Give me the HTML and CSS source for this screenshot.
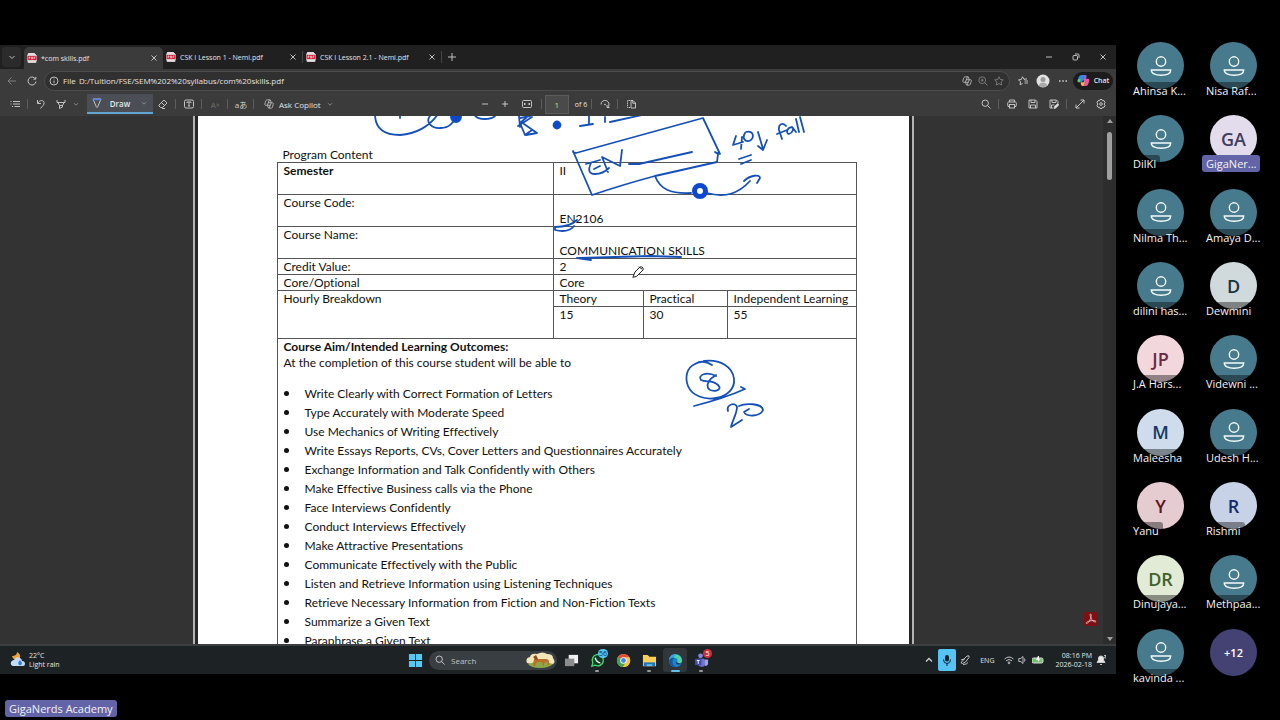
FILE: index.html
```html
<!DOCTYPE html>
<html lang="en">

<head>
    <meta charset="UTF-8">
    <meta name="viewport" content="width=device-width, initial-scale=1.0">
    <title>GigaNerds Academy</title>
    <link rel="stylesheet" href="styles.css">
</head>

<body>

    <!-- shared icons -->
    <svg class="defs" aria-hidden="true">
        <symbol id="pdf" viewBox="0 0 10 10"><path d="M2 0h5l2 2v7.500H1V1z" fill="#f3dcdc"/><rect y="2.500" width="10" height="5" rx="1" fill="#d8203a"/><path d="M2 6V4h1v1H2M4.500 4v2h1V4zM7 6V4h1.500M7 5h1" stroke="#fff" stroke-width=".5" fill="none"/></symbol>
        <symbol id="close" viewBox="0 0 10 10"><path d="M2.500 2.500l5 5M7.500 2.500l-5 5"/></symbol>
        <symbol id="chevron" viewBox="0 0 10 10"><path d="M2.500 4L5 6.500 7.500 4"/></symbol>
        <symbol id="plus" viewBox="0 0 10 10"><path d="M5 1v8M1 5h8"/></symbol>
        <symbol id="star" viewBox="0 0 10 10"><path d="M5 .8l1.300 2.700 3 .4-2.200 2.100.6 3L5 7.600 2.300 9l.6-3L.7 3.900l3-.4z"/></symbol>
        <symbol id="zoomicon" viewBox="0 0 10 10"><circle cx="4.200" cy="4.200" r="3.200"/><path d="M6.500 6.500l3 3"/></symbol>
        <symbol id="copilot" viewBox="0 0 12 12"><path d="M4.500 1h3l1.300 3.500h1.500c1 0 1 1 .8 1.800L10 10c-.3.800-.8 1-1.500 1h-3L4 7.500H2C1 7.500.8 6.600 1 6l1-3.500C2.300 1.500 3 1 4.500 1zM6.500 1L4 7.500M8.800 4.500L6 11M5 4.500h3.500M4 7.500h3.500"/></symbol>
        <symbol id="person" viewBox="0 0 22 22"><circle cx="11" cy="6.500" r="4.700"/><path d="M1.300 15h19.400c0 3.500-4 5.200-9.700 5.200S1.300 18.500 1.300 15z"/></symbol>
    </svg>

    <main class="shared">
        <div class="desktop">
            <div class="tabs">
                <button class="tab-menu" aria-label="Tab actions"><svg class="icon"><use href="#chevron"/></svg></button>
                <div class="tab active"><svg class="icon"><use href="#pdf"/></svg><span>*com skills.pdf</span><button aria-label="Close tab"><svg class="icon"><use href="#close"/></svg></button></div>
                <div class="tab"><svg class="icon"><use href="#pdf"/></svg><span>CSK I Lesson 1 - Nemi.pdf</span><button aria-label="Close tab"><svg class="icon"><use href="#close"/></svg></button></div>
                <div class="tab"><svg class="icon"><use href="#pdf"/></svg><span>CSK I Lesson 2.1 - Nemi.pdf</span><button aria-label="Close tab"><svg class="icon"><use href="#close"/></svg></button></div>
                <button class="tool" aria-label="New tab"><svg class="icon"><use href="#plus"/></svg></button>
                <div class="window-buttons">
                    <button aria-label="Minimize"><svg class="icon" viewBox="0 0 10 10"><path d="M2 5h6"/></svg></button>
                    <button aria-label="Restore"><svg class="icon" viewBox="0 0 10 10"><rect x="2" y="3.500" width="4.500" height="4.500" rx="1"/><path d="M4 2h3c.7 0 1 .3 1 1v3"/></svg></button>
                    <button aria-label="Close"><svg class="icon"><use href="#close"/></svg></button>
                </div>
            </div>

            <div class="address">
                <button class="tool dim" aria-label="Back"><svg class="icon" viewBox="0 0 10 10"><path d="M9 5H1M4.500 1.500L1 5l3.500 3.500"/></svg></button>
                <button class="tool" aria-label="Reload"><svg class="icon" viewBox="0 0 10 10"><path d="M8.500 3A4 4 0 1 0 9 5.500M8.800.8v2.400H6.400"/></svg></button>
                <div class="url">
                    <svg class="icon" viewBox="0 0 10 10"><circle cx="5" cy="5" r="4"/><path d="M5 4.500v2.700M5 2.600v.8"/></svg>
                    <label for="url">File</label>
                    <input type="text" id="url" value="D:/Tuition/FSE/SEM%202%20syllabus/com%20skills.pdf">
                    <button aria-label="Copilot"><svg class="icon"><use href="#copilot"/></svg></button>
                    <button class="dim" aria-label="Zoom"><svg class="icon" viewBox="0 0 10 10"><circle cx="4.200" cy="4.200" r="3.400"/><path d="M6.700 6.700l2.800 2.800M4.200 2.700v3M2.700 4.200h3"/></svg></button>
                    <button class="dim" aria-label="Favorite"><svg class="icon"><use href="#star"/></svg></button>
                </div>
                <button class="tool" aria-label="Favorites"><svg class="icon" viewBox="0 0 10 10"><path d="M7 3.500L6 3.300 4.500.8 3.300 3.500l-2.800.3 2 2-.4 3L4.500 7.500M6.500 5H10M6.500 7H10M6.500 3H9"/></svg></button>
                <button class="tool" aria-label="Profile"><svg class="profile" viewBox="0 0 14 14"><circle cx="7" cy="7" r="6.500" fill="#e2e2e2"/><circle cx="7" cy="5.500" r="2.500" fill="#9a9a9a"/><path d="M2.800 11.500c1-4 7.400-4 8.400 0-2 2.200-6.400 2.200-8.400 0z" fill="#aaa"/></svg></button>
                <button class="tool" aria-label="Settings and more"><svg class="icon" viewBox="0 0 10 10"><path d="M1 5h1.500M4.300 5h1.500M7.500 5H9" stroke-width="1.500"/></svg></button>
                <button class="chat">
                    <svg viewBox="0 0 14 14"><path d="M5 1h3L6 8 4 9H2Q0 9 1 6l1-3q1-2 3-2z" fill="#2b8fe0"/><path d="M1 6l3-1-1 4H2Q0 9 1 6z" fill="#6bcf5e"/><path d="M8 1h1q2 0 1 3L9 7H6z" fill="#9a62ea"/><path d="M8 5h4q2 0 1 3l-1 3q-1 2-3 2H6z" fill="#ea5a95"/><path d="M4 9h4l-1 4H6q-2 0-2-4z" fill="#f5b64a"/></svg>
                    Chat
                </button>
            </div>

            <div class="toolbar">
                <div class="tools">
                    <button class="tool" aria-label="Contents"><svg class="icon" viewBox="0 0 10 10"><path d="M3 2.500h7M3 5h7M4.500 7.500H10M.5 2.500h1M.5 5h1M2 7.500h1"/></svg></button>
                    <i class="sep"></i>
                    <button class="tool" aria-label="Undo"><svg class="icon" viewBox="0 0 10 10"><path d="M1.500 1v3.500H5M1.700 4.200C4 .8 7.500.8 8 3.500S6 7 4.500 9.500"/></svg></button>
                    <button class="tool" aria-label="Highlight"><svg class="icon" viewBox="0 0 10 10"><path d="M1 1v2.500h8V1M2 3.500l1.500 3h3L8 3.500M3.500 6.500v3L6.500 8V6.500"/></svg></button>
                    <button class="arrow" aria-label="Highlight colors"><svg class="chev"><use href="#chevron"/></svg></button>
                    <button class="draw"><svg class="icon" viewBox="0 0 10 10"><path d="M1 1h8L5.800 8.500 5 9.500l-.8-1z"/><path d="M1 1.500h8" stroke="#4f7fe8" stroke-width="1.500"/></svg><b>Draw</b><svg class="chev"><use href="#chevron"/></svg></button>
                    <button class="tool" aria-label="Erase"><svg class="icon" viewBox="0 0 10 10"><path d="M6 1l3 3-4.500 4.500h-2L1 7l0-1zM3.500 3.500l3 3M4 9.500h3"/></svg></button>
                    <i class="sep"></i>
                    <button class="tool" aria-label="Add text"><svg class="icon" viewBox="0 0 10 10"><rect x=".5" y="1" width="9" height="8" rx="1.500"/><path d="M3 4V3h4v1M5 3v4M4 7h2"/></svg></button>
                    <i class="sep"></i>
                    <button class="tool faint" aria-label="Read aloud">A<sup>»</sup></button>
                    <i class="sep"></i>
                    <button class="tool" aria-label="Translate">aあ</button>
                    <i class="sep"></i>
                    <button class="ask"><svg class="icon"><use href="#copilot"/></svg><span>Ask Copilot</span><svg class="chev"><use href="#chevron"/></svg></button>
                </div>
                <div class="tools">
                    <button class="tool" aria-label="Zoom out"><svg class="icon" viewBox="0 0 10 10"><path d="M2 5h6"/></svg></button>
                    <button class="tool" aria-label="Zoom in"><svg class="icon" viewBox="0 0 10 10"><path d="M5 2v6M2 5h6"/></svg></button>
                    <button class="tool wide" aria-label="Fit to width"><svg class="icon" viewBox="0 0 10 10"><rect x=".5" y="1.500" width="9" height="7" rx="1"/><path d="M2 5h2M6 5h2M3 4L2 5l1 1M7 4l1 1-1 1"/></svg></button>
                    <i class="sep"></i>
                    <input type="text" id="page" class="page-number" value="1">
                    <label for="page">of 6</label>
                    <i class="sep"></i>
                    <button class="tool" aria-label="Rotate"><svg class="icon" viewBox="0 0 10 10"><path d="M1 5.500a4 4 0 1 1 6.500 3M9.500 8.500h-2.500V6"/><circle cx="5" cy="5.500" r=".5"/></svg></button>
                    <i class="sep"></i>
                    <button class="tool" aria-label="Page view"><svg class="icon" viewBox="0 0 10 10"><path d="M4 1.500H1.500v7H4" stroke-dasharray="1.500 .7"/><path d="M5 1v8h4.500V4L7 1.500H5M6.800 2v2.300h2.500"/></svg></button>
                </div>
                <div class="tools right">
                    <button class="tool" aria-label="Search"><svg class="icon"><use href="#zoomicon"/></svg></button>
                    <i class="sep"></i>
                    <button class="tool" aria-label="Print"><svg class="icon" viewBox="0 0 10 10"><path d="M2.500 3V1h5v2M2.500 7.500H1c-.8-4.500 0-4.500 1-4.500h6c1 0 1.800 0 1 4.500H7.500"/><rect x="2.500" y="5.500" width="5" height="3.500"/></svg></button>
                    <button class="tool" aria-label="Save"><svg class="icon" viewBox="0 0 10 10"><path d="M1 1h6.500L9 2.500V9H1zM3 1v2.500h4V1M2.500 9V6h5v3"/></svg></button>
                    <button class="tool" aria-label="Save as"><svg class="icon" viewBox="0 0 10 10"><path d="M4 9H1V1h6.500L9 2.500V4M3 1v2.500h4V1M2.500 9V6h3"/><path d="M5 9.500l.5-2L9 4.500l1 1L6.800 9z" fill="#eee"/></svg></button>
                    <i class="sep"></i>
                    <button class="tool" aria-label="Full screen"><svg class="icon" viewBox="0 0 10 10"><path d="M1 9l8-8M5.500 1H9v3.500M1 5.500V9h3.500"/></svg></button>
                    <button class="tool" aria-label="Settings"><svg class="icon" viewBox="0 0 10 10"><path d="M4 .5h2l.5 1.300 1.500-.2 1 1.700-.8 1.700.8 1.700-1 1.700-1.500-.2L6 9.500H4l-.5-1.300-1.500.2-1-1.700L1.800 5 1 3.300l1-1.700 1.500.2z"/><circle cx="5" cy="5" r="1.300"/></svg></button>
                </div>
            </div>

            <div class="viewer">
                <article class="page">
                    <p class="caption">Program Content</p>
                    <table class="course">
                        <colgroup><col class="col-name"><col class="col-theory"><col class="col-practical"><col></colgroup>
                        <tr class="tall"><th>Semester</th><td colspan="3">II</td></tr>
                        <tr class="tall"><td>Course Code:</td><td colspan="3" class="low">EN2106</td></tr>
                        <tr class="tall"><td>Course Name:</td><td colspan="3" class="low">COMMUNICATION SKILLS</td></tr>
                        <tr><td>Credit Value:</td><td colspan="3">2</td></tr>
                        <tr><td>Core/Optional</td><td colspan="3">Core</td></tr>
                        <tr><td rowspan="2">Hourly Breakdown</td><td>Theory</td><td>Practical</td><td>Independent Learning</td></tr>
                        <tr class="tall"><td>15</td><td>30</td><td>55</td></tr>
                        <tr>
                            <td colspan="4" class="outcomes">
                                <h2>Course Aim/Intended Learning Outcomes:</h2>
                                <p>At the completion of this course student will be able to</p>
                                <ul>
                                    <li>Write Clearly with Correct Formation of Letters</li>
                                    <li>Type Accurately with Moderate Speed</li>
                                    <li>Use Mechanics of Writing Effectively</li>
                                    <li>Write Essays Reports, CVs, Cover Letters and Questionnaires Accurately</li>
                                    <li>Exchange Information and Talk Confidently with Others</li>
                                    <li>Make Effective Business calls via the Phone</li>
                                    <li>Face Interviews Confidently</li>
                                    <li>Conduct Interviews Effectively</li>
                                    <li>Make Attractive Presentations</li>
                                    <li>Communicate Effectively with the Public</li>
                                    <li>Listen and Retrieve Information using Listening Techniques</li>
                                    <li>Retrieve Necessary Information from Fiction and Non-Fiction Texts</li>
                                    <li>Summarize a Given Text</li>
                                    <li>Paraphrase a Given Text</li>
                                </ul>
                            </td>
                        </tr>
                    </table>

                    <!-- pen strokes drawn over the page -->
                    <svg class="ink" viewBox="198 116 711 528" aria-hidden="true">
                        <path d="M375 114C375 131 388 135 400 135C416 134 430 126 438 114M400 114v4M430 116C425 122 432 129 441 128C449 128 453 123 457 116M474 114C477 121 492 120 496 115"/>
                        <path d="M519 116L520 127M520 118L530 116M520 123L527 117M518 126L532 117M520 123L525 135L532 130M524 124L537 133L526 135M589 114V124M580 126L593 124M605 117V122M610 122L642 115"/>
                        <path d="M573 152L576 153L703 118L720 154L715 152L718 154L717 162Q690 168 655 176Q625 184 592 195L573 151"/>
                        <path d="M586 164Q593 162 600 160M591 163Q586 174 595 174Q603 174 609 168M594 169L600 166M608 172L602 157L620 166L622 150M629 164H639L692 152"/>
                        <path d="M736 136L733 145L743 142M742 137L741 149M745 133C742 138 745 142 749 141C755 138 754 130 746 132M758 132L763 149M758 146L763 150L767 140M739 159L751 155M741 164L751 160"/>
                        <path d="M786 126C783 122 778 124 779 130L782 139M777 134L787 130M793 128C788 125 785 134 789 134C793 133 794 128 792 127L796 132M796 119L799 132M800 117L804 132"/>
                        <path d="M655 176C660 189 670 194 691 193M707 193C725 198 738 194 750 181M744 181C750 175 760 174 760 178L757 183"/>
                        <path d="M577 220C571 226 563 227 555 227V230C563 232 570 231 574 226M577 258L591 260L580 258L650 256L681 257"/>
                        <path d="M712 365C706 361 700 361 695 364C686 368 685 378 688 386C692 396 705 400 716 398C728 396 735 388 734 379C733 367 720 359 704 361M716 376C707 371 697 375 701 380C706 383 712 379 718 385C724 391 711 393 708 388C706 382 711 378 716 375M694 406Q725 398 745 389L741 387M728 411C726 404 736 402 737 407C737 414 732 421 731 427L742 420M739 406C745 403 762 403 763 410C760 417 746 417 744 412L749 409"/>
                        <g class="blot"><circle cx="456" cy="117" r="5"/><circle cx="557" cy="125" r="3.500"/></g>
                        <circle class="ring" cx="700" cy="191" r="5.500"/>
                        <path class="cursor" d="M633 277l2-5 5-5q2-1 3 1t-1 3l-5 5zM639 267l3 2"/>
                    </svg>
                </article>

                <button class="acrobat" aria-label="Open in Acrobat"><svg viewBox="0 0 14 14"><path d="M6.500 2c1 0 .8 2 .4 3.500C6 8.500 4 11.500 2.800 11.500s-.8-1.500 2-2.300 6.500-.9 7 0-1.300 1.200-3-.3C7.200 7.600 5.300 2 6.500 2z"/></svg></button>
                <div class="scrollbar"><i></i><b></b><i class="down"></i></div>
            </div>

            <div class="taskbar">
                <div class="weather">
                    <svg viewBox="0 0 16 16"><path d="M7 0q0 4-5 4 1 4 5 4 4-1 3-5Q9 1 7 0z" fill="#eda53a"/><path d="M3 14q-3-1-2-4 1-2 3-2 2-4 6-2 2 1 2 3 3 0 3 3 0 2-2 2z" fill="#c5dcf6"/><path d="M10 8q-3 3-1 5 3 1 3-2z" fill="#2f7fe0"/></svg>
                    <p>22°C<br>Light rain</p>
                </div>
                <div class="apps">
                    <button aria-label="Start"><svg viewBox="0 0 16 16"><path d="M1 1h6.500v6.500H1zM8.500 1H15v6.500H8.500zM1 8.500h6.500V15H1zM8.500 8.500H15V15H8.500z" fill="#56c8f2"/></svg></button>
                    <div class="search">
                        <svg class="icon"><use href="#zoomicon"/></svg>
                        <input type="text" aria-label="Search" placeholder="Search">
                        <svg class="horse" viewBox="0 0 30 16"><path d="M2 11Q0 6 5 5q1-4 7-3 6-3 10 0 6 0 6 4 3 4 0 6-12 4-26-1z" fill="#f2e7b8"/><path d="M3 12q12-5 25 0-4 4-13 4T3 12z" fill="#8ea646"/><path d="M8 13l1-6 2-2 2 2h8q3 0 3 3v3h-1l-1-3-3 1v3h-1l-1-4h-5l-2 4H9z" fill="#b9702b"/><path d="M8 5l3-2 2 4-2 1z" fill="#8a4d1e"/></svg>
                    </div>
                    <button aria-label="Task view"><svg viewBox="0 0 16 16"><path d="M5 2h10v9H5z" fill="#f0f0f0"/><path d="M1 6h10v8H1z" fill="#8c8c8c"/></svg></button>
                    <button class="open" aria-label="WhatsApp"><svg viewBox="0 0 16 16"><path d="M2 14l1-3.500a6 6 0 1 1 2.500 2.500z" fill="#123a24" stroke="#41d66c" stroke-width="1.500"/><path d="M5.500 5q1.500 5 5.500 5.500" stroke="#eee" stroke-width="1.500" fill="none"/></svg><em>56</em></button>
                    <button aria-label="Chrome"><svg viewBox="0 0 16 16"><circle cx="8" cy="8" r="7" fill="#f7c631"/><path d="M8 8L2 4.500A7 7 0 0 1 14 4.500z" fill="#e64a3b"/><path d="M8 8L2 4.300A7 7 0 0 0 7.500 15L11 9.500z" fill="#3fa356"/><path d="M8 4.500h6.200A7 7 0 0 1 7.500 15L11 9z" fill="#f7c631"/><circle cx="8" cy="8" r="3.500" fill="#fff"/><circle cx="8" cy="8" r="2.600" fill="#4384ee"/></svg></button>
                    <button class="open" aria-label="File Explorer"><svg viewBox="0 0 16 16"><path d="M1 2h5l2 2h7v10H1z" fill="#f8cf58"/><path d="M2 10h12v4H2z" fill="#1e78b8"/><path d="M5 12h6v2H5z" fill="#6dbfe8"/></svg></button>
                    <button class="open current" aria-label="Edge"><svg viewBox="0 0 16 16"><circle cx="8" cy="8" r="7" fill="#1a82cf"/><path d="M1.200 7A7 7 0 0 1 15 8q0 3-4 3-2 0-1-2 1-4-4-4-3 0-4.800 2z" fill="#50d3a4"/><path d="M1.200 7A7 7 0 0 1 9 1q-2 2-3 4-3 0-4.800 2z" fill="#35a9e4"/><path d="M1 8q2-4 6-3-3 2-2 6 1 4 5 4Q2 16 1 8z" fill="#1758a6"/><path d="M9 9q-1 2 1 3 2 1 4-1-3 1-5-2z" fill="#23303a"/></svg></button>
                    <button class="open" aria-label="Teams"><svg viewBox="0 0 16 16"><circle cx="7" cy="3" r="2.500" fill="#8487e0"/><path d="M4 6h7v8q-5 2-7-2z" fill="#6f73d2"/><path d="M11 7h4v5q-2 3-4 1z" fill="#9b9eea"/><rect x="1" y="6" width="7" height="7" rx="1" fill="#4248b0"/><path d="M3 8h3M4.500 8v3.500" stroke="#fff"/></svg><em class="red">5</em></button>
                </div>
                <div class="tray">
                    <svg class="icon" viewBox="0 0 10 10"><path d="M2 6.500l3-3 3 3" stroke-width="1.300"/></svg>
                    <button class="mic" aria-label="Microphone"><svg viewBox="0 0 10 12"><rect x="3" y="1" width="4" height="6.500" rx="2" fill="#10222c"/><path d="M1.500 5.500q0 4 3.500 4t3.500-4M5 9.500V12" fill="none" stroke="#10222c"/></svg></button>
                    <svg class="icon" viewBox="0 0 10 10"><path d="M1 5l3-1 3-3q3-1 2 1.500L5.500 7 2.500 8.500q-2 0-1-1.500l3-3M3 9.500q4 0 5-2"/></svg>
                    <span class="lang">ENG</span>
                    <svg class="icon" viewBox="0 0 10 10"><path d="M.5 4q4.500-4 9 0M2 5.800q3-2.600 6 0M3.700 7.500q1.300-1 2.600 0"/><circle cx="5" cy="8.300" r=".5"/></svg>
                    <svg class="icon" viewBox="0 0 10 10"><path d="M.8 3.500h2L5 1.500v7l-2.200-2h-2zM6.500 3.500q1 1.500 0 3"/></svg>
                    <svg class="battery" viewBox="0 0 12 10"><rect x="0" y="3" width="11" height="5" rx="1.500" fill="#72c46c" stroke="#ddd"/><path d="M6 1L4 5h2v2l2-3H7V1z" fill="#fff"/></svg>
                    <p class="clock">08:16 PM<br>2026-02-18</p>
                    <svg class="icon" viewBox="0 0 10 10"><path d="M1 7.500L2.500 5V3q0-2 2.500-2t2.500 2v2L9 7.500z" fill="#e8e8e8"/><path d="M4 9.500h2M8 .5h2L8.500 3H10"/></svg>
                </div>
            </div>
        </div>

        <p class="presenter">GigaNerds Academy</p>
    </main>

    <aside class="people">
        <div class="person"><span class="avatar"><svg><use href="#person"/></svg></span><span class="name">Ahinsa K...</span></div>
        <div class="person"><span class="avatar"><svg><use href="#person"/></svg></span><span class="name">Nisa Raf...</span></div>
        <div class="person"><span class="avatar"><svg><use href="#person"/></svg></span><span class="name">DilKI</span></div>
        <div class="person speaking"><span class="avatar lilac">GA</span><span class="name">GigaNer...</span></div>
        <div class="person"><span class="avatar"><svg><use href="#person"/></svg></span><span class="name">Nilma Th...</span></div>
        <div class="person"><span class="avatar"><svg><use href="#person"/></svg></span><span class="name">Amaya D...</span></div>
        <div class="person"><span class="avatar"><svg><use href="#person"/></svg></span><span class="name">dilini has...</span></div>
        <div class="person"><span class="avatar mist">D</span><span class="name">Dewmini</span></div>
        <div class="person"><span class="avatar pink">JP</span><span class="name">J.A Hars...</span></div>
        <div class="person"><span class="avatar"><svg><use href="#person"/></svg></span><span class="name">Videwni ...</span></div>
        <div class="person"><span class="avatar sky">M</span><span class="name">Maleesha</span></div>
        <div class="person"><span class="avatar"><svg><use href="#person"/></svg></span><span class="name">Udesh H...</span></div>
        <div class="person"><span class="avatar rose">Y</span><span class="name">Yanu</span></div>
        <div class="person"><span class="avatar blue">R</span><span class="name">Rishmi</span></div>
        <div class="person"><span class="avatar green">DR</span><span class="name">Dinujaya...</span></div>
        <div class="person"><span class="avatar"><svg><use href="#person"/></svg></span><span class="name">Methpaa...</span></div>
        <div class="person"><span class="avatar"><svg><use href="#person"/></svg></span><span class="name">kavinda ...</span></div>
        <div class="person"><button class="avatar more">+12</button></div>
    </aside>

</body>

</html>
```
FILE: styles.css
```css
* {
    box-sizing: border-box;
}

body {
    margin: 0;
    height: 100vh;
    display: grid;
    grid-template-columns: minmax(0, 1fr) 164px;
    background-color: #000;
    color: #e4e4e4;
    font-family: "Open Sans", "Noto Sans", "Noto Sans CJK JP", sans-serif;
    font-size: 8px;
    overflow: hidden;
}

p, h2, ul {
    margin: 0;
    padding: 0;
}

button, input {
    margin: 0;
    padding: 0;
    border: none;
    background: none;
    color: inherit;
    font: inherit;
}

button {
    display: flex;
    align-items: center;
    justify-content: center;
}

input {
    min-width: 0;
    outline: none;
}

.defs {
    position: absolute;
    width: 0;
    height: 0;
}

.icon {
    width: 10px;
    height: 10px;
    flex: none;
    fill: none;
    stroke: #d0d0d0;
    stroke-width: 0.9;
}

.shared {
    display: flex;
    flex-direction: column;
    min-height: 0;
    padding-top: 45px;
}

.desktop {
    flex: 1;
    min-height: 0;
    display: flex;
    flex-direction: column;
}

/* browser */
.tabs {
    display: flex;
    align-items: center;
    height: 24px;
    padding-left: 2px;
    background-color: #202020;
}

.tab-menu {
    width: 19px;
    height: 20px;
    margin-right: 3px;
    border-radius: 4px;
    background-color: #2b2b2b;
}

.tab {
    display: flex;
    align-items: center;
    gap: 4px;
    width: 139px;
    height: 24px;
    padding: 0 4px 0 3px;
    font-size: 7px;
}

.tab span {
    flex: 1;
    white-space: nowrap;
}

.tab.active {
    height: 22px;
    align-self: flex-end;
    border-radius: 5px 5px 0 0;
    background-color: #3b3b3b;
}

.tab + .tab + .tab {
    border-left: 1px solid #444;
    height: 12px;
}

.tab + .tool {
    height: 12px;
    border-left: 1px solid #444;
}

.window-buttons {
    display: flex;
    margin-left: auto;
}

.window-buttons button {
    width: 27px;
}

.address {
    display: flex;
    align-items: center;
    height: 23px;
    padding: 0 3px 0 2px;
    background-color: #3b3b3b;
}

.tool {
    width: 20px;
    height: 18px;
    color: #ccc;
}

.dim {
    opacity: 0.5;
}

.faint {
    opacity: 0.35;
}

.url {
    flex: 1;
    display: flex;
    align-items: center;
    gap: 4px;
    height: 20px;
    margin: 0 3px 0 2px;
    padding: 0 4px;
    border: 1px solid #4c4c4c;
    border-radius: 10px;
    background-color: #303030;
}

.url label {
    width: 12px;
}

.url input {
    flex: 1;
}

.url button {
    width: 12px;
}

.profile {
    width: 14px;
    height: 14px;
}

.chat {
    gap: 4px;
    width: 40px;
    height: 18px;
    border-radius: 9px;
    background-color: #1c1c1c;
    font-size: 7px;
    font-weight: 600;
}

.chat svg {
    width: 13px;
    height: 13px;
}

.toolbar {
    display: flex;
    align-items: center;
    height: 24px;
    padding: 0 5px;
    background-color: #3b3b3b;
}

.tools {
    display: flex;
    align-items: center;
}

.tools:first-child,
.tools.right {
    flex: 1;
}

.tools.right {
    justify-content: flex-end;
    gap: 1px;
}

.sep {
    width: 2px;
    height: 10px;
    margin: 0 2px;
    border-left: 1px solid #5c5c5c;
}

.tools.right .sep {
    margin: 0 1px;
}

.arrow {
    width: 10px;
    margin-right: 6px;
}

.wide {
    width: 24px;
}

.chev {
    width: 8px;
    height: 8px;
    fill: none;
    stroke: #999;
}

.draw {
    gap: 10px;
    width: 66px;
    height: 20px;
    background-color: #4b4f55;
    border-bottom: 2px solid #62a3cf;
}

.draw .icon {
    margin-right: -2px;
}

.draw b {
    font-weight: 600;
}

.ask {
    gap: 5px;
    padding-left: 7px;
}

.page-number {
    width: 24px;
    height: 19px;
    margin-right: 6px;
    border: 1px solid #5c5c5c;
    background-color: #4a4a4a;
    color: #d9dc7a;
    text-align: center;
}

.tools label {
    margin-right: 2px;
    font-size: 7px;
}

/* pdf */
.viewer {
    position: relative;
    flex: 1;
    min-height: 0;
    display: flex;
    justify-content: center;
    padding-right: 10px;
    overflow: hidden;
    background-color: #333;
    border-bottom: 2px solid #3c3e40;
}

.page {
    position: relative;
    align-self: flex-start;
    width: 711px;
    padding: 31px 52px 20px 79px;
    background-color: #fff;
    box-shadow: 0 0 0 3px #262626, 0 0 0 5px #b4b4b4;
    color: #111;
    font-family: Lato, "Open Sans", sans-serif;
    font-size: 12px;
    font-variant-ligatures: none;
    line-height: 16px;
}

.caption {
    padding-left: 6px;
    line-height: 15px;
}

.course {
    width: 100%;
    table-layout: fixed;
    border-collapse: collapse;
}

.course th,
.course td {
    height: 16px;
    padding: 0 6px;
    border: 1px solid #555;
    line-height: 15px;
    text-align: left;
    vertical-align: top;
    white-space: nowrap;
}

.course .tall > * {
    height: 32px;
}

.course .low {
    vertical-align: bottom;
}

.col-name {
    width: 276px;
}

.col-theory {
    width: 90px;
}

.col-practical {
    width: 84px;
}

.course h2 {
    font-size: 12px;
    line-height: 16px;
}

.outcomes p {
    line-height: 16px;
}

.outcomes ul {
    margin-top: 13px;
    list-style: none;
}

.outcomes li {
    display: flex;
    align-items: center;
    gap: 16px;
    height: 19px;
}

.outcomes li::before {
    content: "";
    width: 5px;
    height: 5px;
    border-radius: 50%;
    background-color: #111;
}

.ink {
    position: absolute;
    top: 0;
    left: 0;
    width: 711px;
    height: 528px;
    fill: none;
    stroke: #1450b8;
    stroke-width: 1.8;
    stroke-linecap: round;
    stroke-linejoin: round;
}

.ink .blot {
    fill: #0c48d0;
}

.ink .ring {
    stroke: #0c48d0;
    stroke-width: 5;
}

.ink .cursor {
    fill: #fff;
    stroke: #222;
    stroke-width: 1;
}

.acrobat {
    position: absolute;
    right: 18px;
    bottom: 18px;
    width: 14px;
    height: 14px;
    border-radius: 2px;
    background-color: #7c1014;
}

.acrobat svg {
    width: 14px;
    fill: none;
    stroke: #e0b0b0;
}

.scrollbar {
    position: absolute;
    top: 0;
    right: 0;
    bottom: 0;
    width: 13px;
    display: flex;
    flex-direction: column;
    align-items: center;
    padding: 3px 0;
    background-color: #2d2d2d;
}

.scrollbar i {
    border: 3px solid transparent;
    border-top: none;
    border-bottom: 4px solid #a0a0a0;
}

.scrollbar b {
    width: 5px;
    height: 48px;
    margin-top: 9px;
    border-radius: 3px;
    background-color: #a0a0a0;
}

.scrollbar .down {
    margin-top: auto;
    border-bottom: none;
    border-top: 4px solid #a0a0a0;
}

/* taskbar */
.taskbar {
    display: grid;
    grid-template-columns: 1fr auto 1fr;
    align-items: center;
    height: 28px;
    padding: 0 10px;
    background-color: #1d2225;
}

.weather {
    display: flex;
    align-items: center;
    gap: 3px;
    line-height: 9px;
}

.weather svg {
    width: 16px;
    height: 16px;
}

.weather p,
.clock {
    font-size: 7px;
}

.apps {
    display: flex;
    align-items: center;
    gap: 2px;
}

.apps button {
    position: relative;
    width: 24px;
    height: 24px;
    border-radius: 3px;
}

.apps button svg {
    width: 15px;
    height: 15px;
}

.open::after {
    content: "";
    position: absolute;
    bottom: 0;
    width: 4px;
    height: 2px;
    border-radius: 1px;
    background-color: #999;
}

.apps .current {
    background-color: #30363a;
}

.current::after {
    width: 9px;
    background-color: #62c0ec;
}

.apps em {
    position: absolute;
    top: 1px;
    right: 1px;
    min-width: 9px;
    padding: 0 1px;
    border-radius: 5px;
    background-color: #55c4f0;
    color: #10303f;
    font-size: 7px;
    line-height: 9px;
    font-style: normal;
}

.apps .red {
    background-color: #d32f38;
    color: #fff;
}

.search {
    display: flex;
    align-items: center;
    gap: 6px;
    width: 128px;
    height: 19px;
    padding: 0 2px 0 6px;
    border-radius: 10px;
    background-color: #383e41;
}

.search input {
    flex: 1;
}

.search input::placeholder {
    color: #c4c4c4;
}

.horse {
    width: 30px;
    height: 16px;
}

.tray {
    display: flex;
    align-items: center;
    justify-content: flex-end;
    gap: 4px;
    line-height: 9px;
}

.mic {
    width: 18px;
    height: 22px;
    border-radius: 2px;
    background-color: #55c4f5;
}

.mic svg {
    width: 10px;
    height: 12px;
}

.lang {
    margin: 0 6px;
    font-size: 7px;
}

.battery {
    width: 12px;
    height: 10px;
}

.clock {
    margin-left: 7px;
    text-align: right;
}

.presenter {
    align-self: flex-start;
    margin: 26px 0 3px 5px;
    padding: 0 4px;
    border-radius: 3px;
    background-color: #6264a7;
    color: #f2f2f2;
    font-size: 11px;
    line-height: 17px;
}

/* participants */
.people {
    display: grid;
    grid-template-columns: 1fr 1fr;
    grid-auto-rows: 1fr;
    padding: 29px 10px 31px 8px;
}

.person {
    position: relative;
    display: grid;
    place-items: center;
}

.avatar {
    display: flex;
    align-items: center;
    justify-content: center;
    width: 47px;
    height: 47px;
    border-radius: 50%;
    background-color: #467a8c;
    font-size: 18px;
    font-weight: 600;
}

.avatar svg {
    width: 22px;
    height: 22px;
    fill: none;
    stroke: #f2fafa;
    stroke-width: 1.4;
}

.name {
    position: absolute;
    top: 53px;
    left: 5px;
    padding: 0 4px;
    border-radius: 3px;
    background-color: rgba(0, 0, 0, 0.4);
    color: #f4f4f4;
    font-size: 11px;
    line-height: 17px;
    white-space: nowrap;
}

.speaking .name {
    background-color: #6264a7;
}

.lilac { background-color: #e2dcec; color: #403a5c; }
.mist { background-color: #d0dadd; color: #17333d; }
.pink { background-color: #f2d8dc; color: #6d2740; }
.sky { background-color: #cedcec; color: #133a66; }
.rose { background-color: #e4ccd0; color: #62131d; }
.blue { background-color: #c8d2e6; color: #122a68; }
.green { background-color: #e1ebd6; color: #41602c; }

.more {
    background-color: #444272;
    color: #fff;
    font-size: 11px;
}
```
